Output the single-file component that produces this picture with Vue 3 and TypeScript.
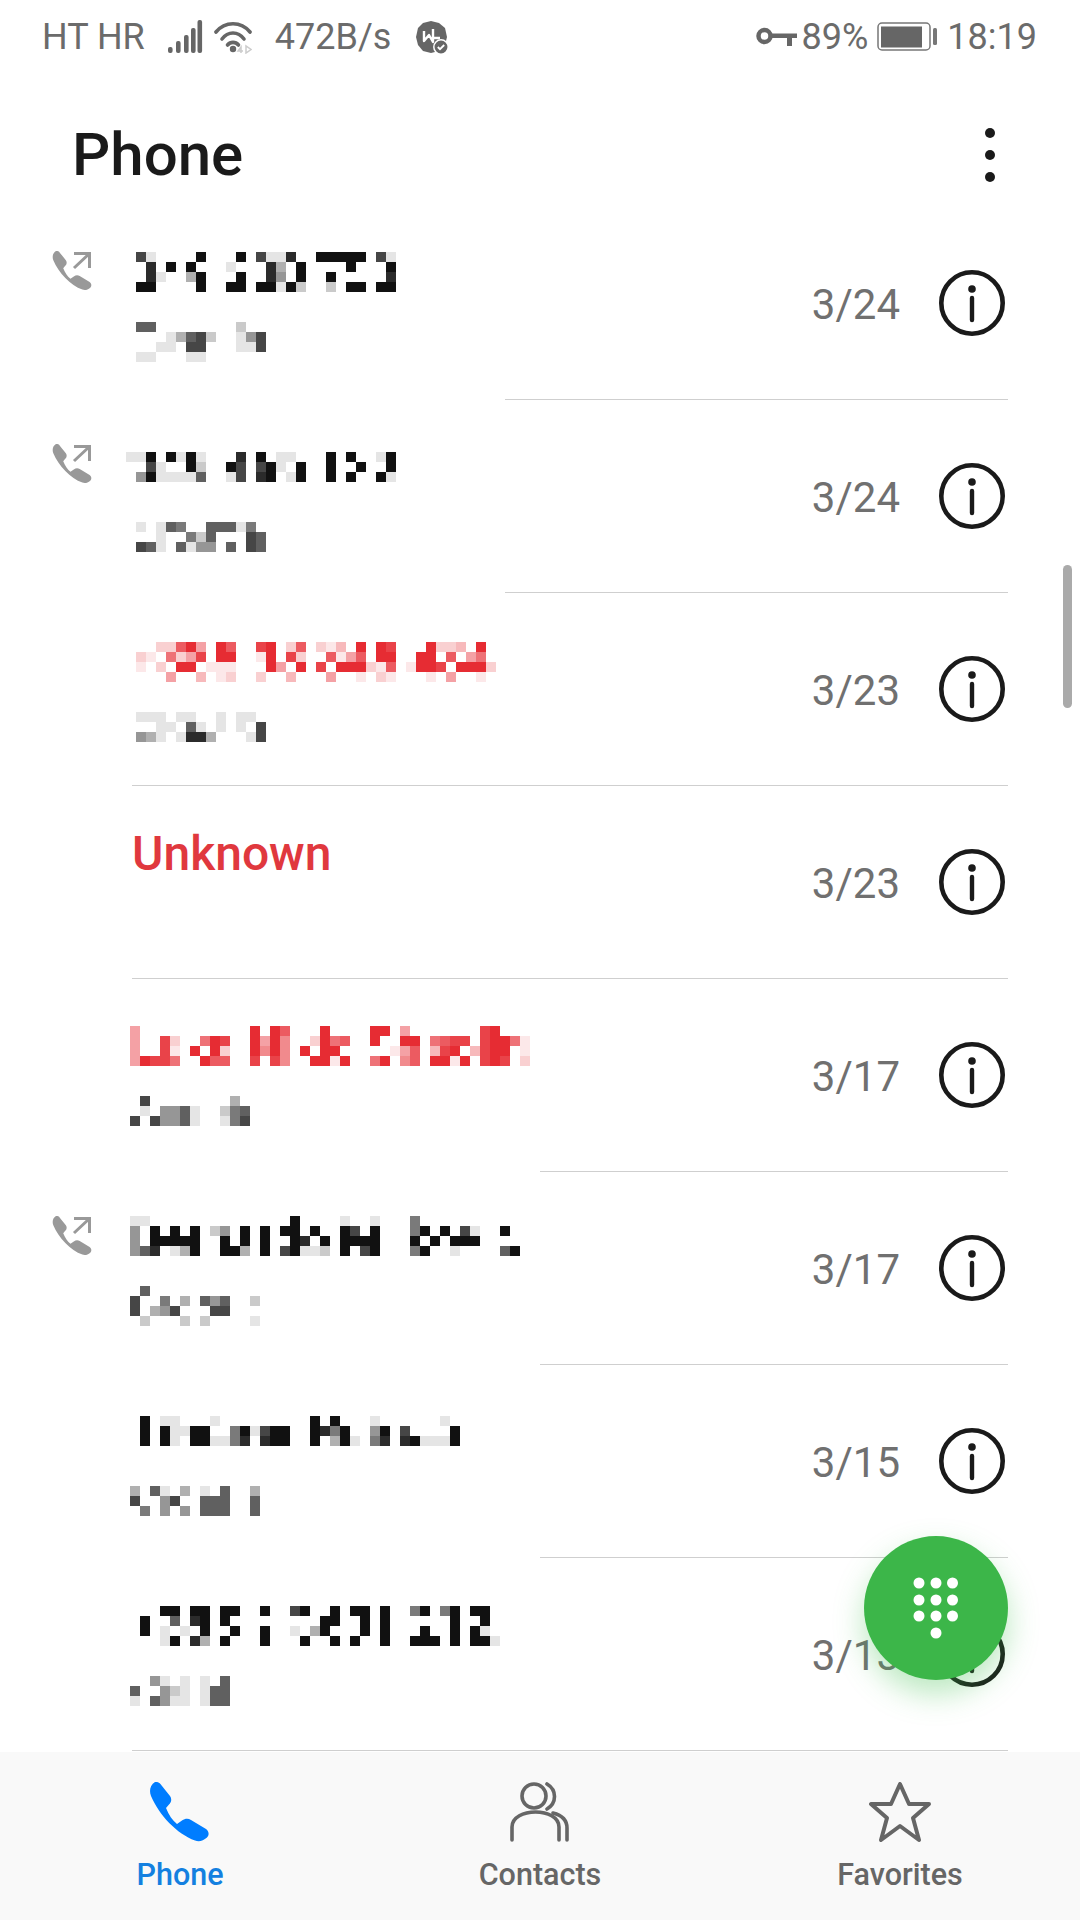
<script setup lang="ts">
interface CallRow {
  date: string
  x: number
  top: number
  line: number
  outgoing?: boolean
  missed?: boolean
  label?: string
  name?: string[]
  sub?: string[]
}

const handset =
  'M6 0C9-.5 11 1 13 4L21 14C23 17 22.5 20 20 22.5L17 26C20 33 23 38 28 42L33 38.5C36 36.5 39 36 42 38L57 47C60 49.5 60.5 53 58 55.5C54 59 50 60 46 58.5C28 52 10 33 2 14C0 9 1 3 6 0Z'

// 打码文字：每行 "列:深度"，深度 0-9
const calls: CallRow[] = [
  {
    date: '3/24', x: 136, top: 45, line: 505, outgoing: true,
    name: [
      '0:7 1:1 6:9 10:9 12:7 13:1 14:1 15:8 18:9 19:9 20:9 21:9 22:9 24:7 25:1',
      '1:8 3:9 5:9 9:1 13:8 14:3 16:9 21:9 25:9',
      '1:8 2:1 5:3 6:9 10:9 13:8 14:4 16:9 19:9 25:8',
      '0:9 1:9 6:9 9:9 10:9 12:9 13:9 14:1 15:9 16:2 19:2 21:9 22:9 24:9 25:9'
    ],
    sub: ['0:6 1:6 10:2', '3:1 4:3 5:6 6:7 7:2 10:1 11:4 12:7', '2:1 3:1 5:7 6:7 10:1 11:1 12:7', '0:1 1:1 5:1 6:1']
  },
  {
    date: '3/24', x: 126, top: 52, line: 505, outgoing: true,
    name: [
      '0:1 1:1 2:9 4:9 5:1 6:9 7:1 11:8 13:9 15:1 16:1 20:9 22:9 25:1 26:9',
      '2:7 3:1 6:9 7:2 10:9 11:7 13:7 14:9 15:1 17:9 20:9 23:9 26:9',
      '1:4 2:9 3:1 4:1 5:1 6:1 7:6 10:1 11:7 13:8 14:9 16:1 17:9 20:9 22:9 25:9 26:1'
    ],
    sub: ['1:1 3:1 4:6 5:5 8:6 9:6 10:6 11:1 12:5', '3:1 6:5 7:2 8:6 12:7 13:6', '1:7 2:6 3:1 5:6 6:1 7:4 8:4 10:6 12:7 13:6']
  },
  {
    date: '3/23', x: 126, top: 49, line: 132, missed: true,
    name: [
      '3:2 4:2 5:7 6:9 7:4 9:9 10:7 13:8 14:9 16:2 17:7 19:2 20:1 21:3 23:9 25:9 26:8 30:9 31:2 32:2 33:3 35:9',
      '1:2 2:1 4:6 5:2 6:4 7:8 9:9 10:9 13:1 14:9 16:8 17:2 20:7 21:1 22:4 23:7 25:9 26:9 29:9 30:9 32:7 34:4 35:6',
      '1:1 3:2 5:9 6:9 8:1 9:1 10:1 14:9 15:4 17:9 19:8 21:9 22:9 23:9 24:2 25:1 26:7 28:1 29:9 30:9 31:8 33:9 34:9 35:9 36:2',
      '4:4 7:3 9:1 10:2 13:2 16:3 20:4 23:1 25:2 26:1 30:1 32:4 35:1'
    ],
    sub: ['1:1 2:1 3:1 5:1 6:1 9:1 11:1 12:1', '3:1 4:1 6:6 7:1 9:1 11:1 13:7', '1:4 2:3 3:1 5:1 6:8 7:8 8:3 12:1 13:7']
  },
  { date: '3/23', x: 132, top: 45, line: 132, missed: true, label: 'Unknown' },
  {
    date: '3/17', x: 130, top: 47, line: 540, missed: true,
    name: [
      '0:4 12:9 14:9 15:7 19:9 24:9 25:9 27:4 35:8 36:9',
      '0:4 3:8 4:2 7:6 8:9 9:8 12:9 13:4 14:9 15:5 18:2 19:9 20:6 21:7 24:9 27:9 28:9 30:6 31:7 32:8 33:8 35:8 36:9 37:9 38:6 39:1',
      '0:4 3:8 4:1 6:9 8:9 9:2 12:9 13:5 14:9 15:5 17:9 19:9 20:9 26:1 27:4 28:7 30:3 31:8 32:9 34:3 35:8 36:9 37:9 39:1',
      '0:4 1:9 2:8 3:8 4:6 7:9 8:7 9:7 12:8 14:8 15:5 18:9 19:9 20:1 21:9 24:6 25:9 27:5 28:7 30:9 31:9 32:1 33:9 35:8 36:9 37:8 39:2'
    ],
    sub: ['1:7 10:3', '1:1 3:4 4:4 5:6 6:1 9:2 10:5 11:6', '0:7 2:7 3:4 4:4 5:6 6:1 9:1 10:5 11:7']
  },
  {
    date: '3/17', x: 130, top: 44, line: 540, outgoing: true,
    name: [
      '0:1 1:1 16:9 21:1 24:1 28:5',
      '0:4 2:9 4:9 6:9 8:2 9:4 11:9 13:9 15:9 16:9 18:9 21:9 22:7 24:9 28:5 29:9 31:9 33:7 34:1 37:9',
      '0:4 2:9 3:9 4:9 5:9 6:9 9:9 11:9 13:9 16:9 17:8 19:9 21:9 22:9 23:9 24:9 28:9 30:9 32:9 33:9 34:9',
      '0:4 1:6 2:8 4:1 5:3 6:9 9:9 10:9 11:3 13:9 15:7 16:9 17:1 18:1 19:2 21:9 23:7 24:9 28:5 29:9 32:1 37:6 38:9'
    ],
    sub: ['1:6', '0:7 3:5 5:3 7:6 8:4 9:6 12:2', '0:7 2:3 3:4 4:7 8:7 9:7', '1:2 5:2 7:2 12:1']
  },
  {
    date: '3/15', x: 130, top: 51, line: 540,
    name: [
      '1:9 3:1 4:1 8:1 18:9 20:9 24:1 31:1',
      '1:9 3:9 4:1 5:1 6:9 7:9 10:5 11:9 12:1 13:7 14:9 15:9 18:9 19:8 20:5 21:9 24:4 25:9 27:7 32:9',
      '1:9 3:9 4:1 6:9 7:9 8:1 9:1 10:5 11:8 13:8 14:9 15:9 18:9 20:3 21:9 22:1 24:5 25:8 27:8 28:9 29:1 30:1 31:1 32:9'
    ],
    sub: ['0:3 2:6 3:1 5:3 7:1 9:6 12:3', '0:7 3:4 4:7 7:6 8:6 9:6 12:6', '1:5 3:4 5:4 7:6 8:6 9:6 12:6']
  },
  {
    date: '3/13', x: 130, top: 48, line: 132,
    name: [
      '3:9 4:9 6:9 7:9 9:9 10:9 13:9 16:7 17:9 20:9 22:9 23:9 25:9 28:5 29:9 31:5 32:9 34:9 35:9',
      '1:9 4:6 6:8 7:9 9:9 19:9 20:9 23:9 25:9 32:9 35:9',
      '1:9 3:1 5:1 7:9 10:9 13:9 16:1 18:3 19:9 23:9 25:9 29:9 32:9 34:9 35:1',
      '3:1 4:9 6:8 7:3 9:9 13:9 17:9 20:9 22:9 25:9 28:9 29:9 30:9 32:9 34:9 35:9 36:1'
    ],
    sub: ['2:4 3:1 5:1 7:1 9:6', '0:6 3:4 4:2 5:1 7:1 8:6 9:6', '0:1 2:6 3:4 4:1 5:1 7:1 8:6 9:6']
  }
]

// 把 "列:深度" 展开成方块
const cells = (rows: string[] = []) =>
  rows.flatMap((row, r) =>
    row.split(' ').filter(Boolean).map((cell) => {
      const [c, v] = cell.split(':').map(Number)
      return { x: c * 10, y: r * 10, o: v / 9 }
    })
  )

const tabs = ['Phone', 'Contacts', 'Favorites']
const signalBars = [
  { x: 0, h: 6 },
  { x: 8, h: 12 },
  { x: 16, h: 18 },
  { x: 23, h: 25 },
  { x: 29.5, h: 33 }
]
</script>

<template>
  <div class="screen">
    <div class="status">
      <span class="status-text carrier">HT HR</span>
      <svg class="sig" width="36" height="34" viewBox="0 0 36 34">
        <rect v-for="b in signalBars" :key="b.x" :x="b.x" :y="33 - b.h" width="4.6" :height="b.h" rx="2" fill="#666" />
      </svg>
      <svg class="wifi" width="38" height="34" viewBox="0 0 38 34">
        <g fill="none" stroke="#666" stroke-width="3.6" stroke-linecap="round">
          <path d="M2 12C11 1 27 1 36 12" />
          <path d="M8 19C14 11 24 11 30 19" />
          <path d="M13.5 25C16.5 21.5 21.5 21.5 24.5 25" />
        </g>
        <circle cx="19" cy="29" r="3.2" fill="#666" />
        <path d="M27 33V27L24 31H29M32 26V33L37 29.5Z" fill="none" stroke="#ccc" stroke-width="1.5" />
      </svg>
      <span class="status-text speed">472B/s</span>
      <svg class="badge" width="34" height="34" viewBox="0 0 34 34">
        <path d="M16 1L24 3 30 8 32 17 30 25 24 31 16 33 8 31 3 25 1 17 3 8 8 3Z" fill="#666" />
        <path d="M9 11V21L14 15 18 22V9M18 18H25" fill="none" stroke="#fff" stroke-width="2.4" stroke-linejoin="round" />
        <circle cx="26" cy="27" r="7.2" fill="#666" stroke="#fff" stroke-width="1.5" />
        <path d="M22.8 27L25 29.2 29.2 25" fill="none" stroke="#fff" stroke-width="1.8" />
      </svg>
      <span class="spacer"></span>
      <svg class="key" width="42" height="20" viewBox="0 0 42 20">
        <circle cx="8.5" cy="9" r="6" fill="none" stroke="#666" stroke-width="4.5" />
        <path d="M14 6.5H41V11H36V19H31V11H14Z" fill="#666" />
      </svg>
      <span class="status-text pct">89%</span>
      <svg class="batt" width="60" height="30" viewBox="0 0 60 30">
        <rect x="1" y="1" width="52" height="27" rx="4" fill="none" stroke="#777" stroke-width="1.5" />
        <rect x="4" y="4.5" width="41" height="21" fill="#666" />
        <rect x="56" y="6" width="4" height="17" rx="1.5" fill="#777" />
      </svg>
      <span class="status-text time">18:19</span>
    </div>

    <header class="header">
      <h1 class="title">Phone</h1>
      <div class="more"><i></i><i></i><i></i></div>
    </header>

    <div class="list">
      <div v-for="(call, i) in calls" :key="i" class="item">
        <div class="row">
          <div class="lead">
            <svg v-if="call.outgoing" width="40" height="40" viewBox="0 0 40 40">
              <path :d="handset" fill="#999" transform="scale(.66)" />
              <path d="M22 17L37 3M22 2.5H37.5V17" fill="none" stroke="#999" stroke-width="3" />
            </svg>
          </div>
          <div class="body" :class="{ missed: call.missed }" :style="{ marginLeft: call.x - 126 + 'px', paddingTop: call.top + 'px' }">
            <div v-if="call.label" class="label">{{ call.label }}</div>
            <template v-else>
              <svg class="blur" width="410" height="40" shape-rendering="crispEdges">
                <rect v-for="(c, k) in cells(call.name)" :key="k" :x="c.x" :y="c.y" width="10" height="10" :opacity="c.o" />
              </svg>
              <svg class="blur sub" width="410" height="40" shape-rendering="crispEdges">
                <rect v-for="(c, k) in cells(call.sub)" :key="k" :x="c.x" :y="c.y" width="10" height="10" :opacity="c.o" />
              </svg>
            </template>
          </div>
          <span class="date">{{ call.date }}</span>
          <svg class="info" width="66" height="66" viewBox="0 0 66 66">
            <circle cx="33" cy="33" r="30.7" fill="none" stroke="#1a1a1a" stroke-width="4.6" />
            <circle cx="33" cy="19" r="3.8" fill="#1a1a1a" />
            <path d="M33 28V50" stroke="#1a1a1a" stroke-width="4.4" stroke-linecap="round" />
          </svg>
        </div>
        <div class="line" :style="{ marginLeft: call.line + 'px' }"></div>
      </div>
    </div>

    <nav class="tabs">
      <div v-for="(tab, i) in tabs" :key="tab" class="tab" :class="{ active: i === 0 }">
        <svg v-if="i === 0" width="62" height="60" viewBox="0 0 62 60">
          <path :d="handset" fill="#007dff" />
        </svg>
        <svg v-else-if="i === 1" width="62" height="60" viewBox="0 0 62 60" fill="none" stroke="#666" stroke-width="3.6" stroke-linecap="round">
          <circle cx="25" cy="14" r="12" />
          <path d="M38 2C48 8 48 21 38 27" />
          <path d="M3 58V45C3 25 50 25 50 45V58" />
          <path d="M44 31C52 33 58 38 58 46V58" />
        </svg>
        <svg v-else width="64" height="60" viewBox="0 0 64 60">
          <path d="M32 2L41 22H61L45 36 51 58 32 44 13 58 19 36 3 22H23Z" fill="none" stroke="#666" stroke-width="4" stroke-linejoin="round" />
        </svg>
        <span class="tab-label">{{ tab }}</span>
      </div>
    </nav>

    <!-- 悬浮层 -->
    <div class="scrollbar"></div>
    <button class="fab" type="button">
      <svg width="46" height="62" viewBox="0 0 46 62" fill="#fff">
        <circle cx="6" cy="6" r="5.5" /><circle cx="23" cy="6" r="5.5" /><circle cx="39.5" cy="6" r="5.5" />
        <circle cx="6" cy="23" r="5.5" /><circle cx="23" cy="23" r="5.5" /><circle cx="39.5" cy="23" r="5.5" />
        <circle cx="6" cy="39" r="5.5" /><circle cx="23" cy="39" r="5.5" /><circle cx="39.5" cy="39" r="5.5" />
        <circle cx="23" cy="56" r="5.5" />
      </svg>
    </button>
  </div>
</template>

<style scoped>
.screen {
  position: relative;
  display: flex;
  flex-direction: column;
  width: 1080px;
  height: 1920px;
  overflow: hidden;
  background: #fff;
  font-family: Roboto, "Liberation Sans", sans-serif;
}

.status {
  display: flex;
  align-items: center;
  flex: none;
  height: 72px;
  padding: 2px 43px 0 42px;
  box-sizing: border-box;
}
.status-text {
  font-size: 36px;
  line-height: 40px;
  color: #6b6b6b;
}
.sig { margin-left: 23px; }
.wifi { margin-left: 10px; }
.speed { margin-left: 23px; }
.badge { margin-left: 24px; }
.spacer { flex: 1; }
.pct { margin-left: 4px; }
.batt { margin-left: 9px; }
.time { margin-left: 10px; }

.header {
  display: flex;
  align-items: center;
  justify-content: space-between;
  flex: none;
  height: 135px;
  padding: 30px 85px 0 72px;
  box-sizing: border-box;
}
.title {
  margin: 0;
  font-size: 60px;
  font-weight: 500;
  line-height: 70px;
  color: #1a1a1a;
}
.more {
  display: flex;
  flex-direction: column;
  gap: 12px;
  margin-top: 0;
}
.more i {
  width: 10px;
  height: 10px;
  border-radius: 50%;
  background: #1a1a1a;
}

.list {
  flex: 1;
  min-height: 0;
}
.row {
  display: flex;
  align-items: center;
  height: 192px;
  padding-right: 75px;
  box-sizing: border-box;
}
.lead {
  align-self: flex-start;
  flex: none;
  width: 126px;
  padding: 44px 0 0 52px;
  box-sizing: border-box;
}
.body {
  align-self: flex-start;
  flex: 1;
  min-width: 0;
  fill: #111;
}
.body.missed .blur:not(.sub) { fill: #e62c33; }
.blur { display: block; }
.sub { margin-top: 30px; }
.label {
  font-size: 48px;
  font-weight: 500;
  line-height: 46px;
  color: #e0383e;
}
.date {
  flex: none;
  margin: 3px 39px 0 0;
  font-size: 42px;
  line-height: 50px;
  color: #707070;
}
.info { flex: none; }
.line {
  height: 1px;
  margin-right: 72px;
  background: #cfcfcf;
}

.tabs {
  display: grid;
  grid-template-columns: repeat(3, 1fr);
  flex: none;
  height: 168px;
  background: #f9f9f9;
}
.tab {
  display: flex;
  flex-direction: column;
  align-items: center;
  padding-top: 30px;
  box-sizing: border-box;
}
.tab-label {
  margin-top: 16px;
  font-size: 30.5px;
  font-weight: 500;
  line-height: 34px;
  color: #666;
}
.tab.active .tab-label { color: #1480e0; }

.scrollbar {
  position: absolute;
  top: 565px;
  left: 1063px;
  width: 9px;
  height: 143px;
  border-radius: 5px;
  background: #aaa;
}
.fab {
  position: absolute;
  top: 1536px;
  left: 864px;
  display: flex;
  align-items: center;
  justify-content: center;
  width: 144px;
  height: 144px;
  padding: 0;
  border: 0;
  border-radius: 50%;
  background: #3cb649;
  box-shadow: 0 14px 30px rgba(60, 190, 75, 0.35);
}
</style>
